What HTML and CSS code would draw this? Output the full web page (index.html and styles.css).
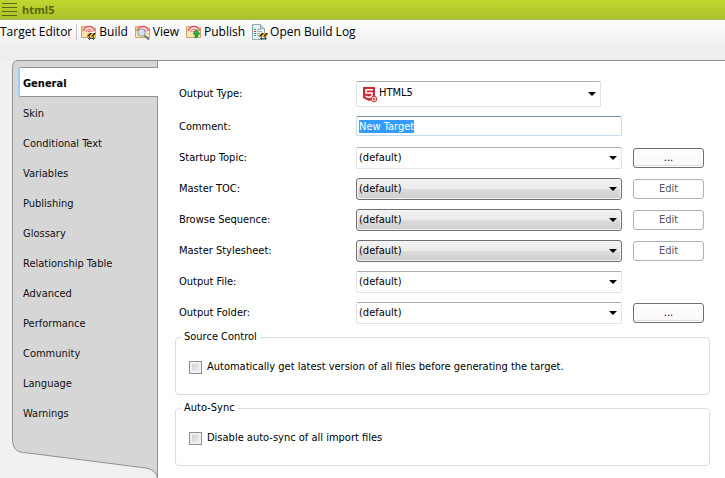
FILE: index.html
```html
<!DOCTYPE html>
<html lang="en">
<head>
<meta charset="utf-8">
<title>html5</title>
<link rel="stylesheet" href="styles.css">
</head>
<body>
<svg class="symbols" aria-hidden="true">
  <symbol id="folder" viewBox="0 0 16 16">
    <path d="M.5 13.500V2.500H5L6.500 4H14.500V13.500Z" fill="#efcf86" stroke="#c9a766"/>
    <path d="M2 9V7A6 6 0 0 1 14 7V9Z" fill="#fff0ed"/>
    <path d="M2.500 7A5.600 5.600 0 0 1 13.500 7" fill="none" stroke="#e8555c" stroke-width="1.500"/>
    <path d="M4.700 8A3.400 3.400 0 0 1 11.300 8" fill="none" stroke="#f08486" stroke-width="1.300"/>
    <path d="M7 8A1.200 1.200 0 0 1 9.200 8" fill="none" stroke="#e8555c" stroke-width="1.200"/>
    <path d="M1 13V8H6L7.500 9.500H14V13Z" fill="#f8e4ad"/>
  </symbol>
  <symbol id="barrier" viewBox="0 0 9 7">
    <path d="M2.500 3V7M6.500 3V7M1 5.500H8" stroke="#555" fill="none"/>
    <path d="M0 0H9V3.500H0Z" fill="#ffc928"/>
    <path d="M0 3.500L3 0H5L2 3.500ZM4 3.500L7 0H9L6 3.500Z" fill="#222"/>
  </symbol>
</svg>

<header class="titlebar">
  <svg class="grip" width="15" height="14" aria-hidden="true"><path d="M0 .5H15M0 4.500H15M0 8.500H15M0 12.500H15" stroke="#59680f"/></svg>
  <h1>html5</h1>
</header>

<div class="toolbar" role="toolbar" aria-label="Target Editor">
  <span class="caption">Target Editor</span>
  <button type="button"><svg width="16" height="16" viewBox="0 0 16 16"><use href="#folder" width="16" height="16"/><use href="#barrier" x="6" y="9" width="9" height="7"/></svg>Build</button>
  <button type="button"><svg width="16" height="16" viewBox="0 0 16 16"><use href="#folder" width="16" height="16"/><path d="M9.500 11.500L14 15.500" stroke="#777" stroke-width="2"/><circle cx="6.500" cy="8.500" r="3.700" fill="#d3e2ec" stroke="#8c9eac"/></svg>View</button>
  <button type="button"><svg width="16" height="16" viewBox="0 0 16 16"><use href="#folder" width="16" height="16"/><path d="M10.500 5.500L14 10H12V12.500L9 14V10H7Z" fill="#27b53e" stroke="#0c8427" stroke-width=".7"/></svg>Publish</button>
  <button type="button"><svg width="16" height="16" viewBox="0 0 16 16"><path d="M.5 .5H8.500L12.500 4.500V15.500H.5Z" fill="#eaf1f4" stroke="#91a5ad"/><path d="M8.500 .5V4.500H12.500" fill="#c9d8de" stroke="#91a5ad"/><path d="M5 5.500H9M5 7.500H10M5 9.500H10M5 11.500H8" stroke="#9cadb6"/><path d="M2 5.500H4" stroke="#19a83b"/><path d="M2 7.500H4" stroke="#e83434"/><path d="M2 9.500H4" stroke="#2575e1"/><path d="M2 11.500H4" stroke="#19a83b"/><use href="#barrier" x="7" y="9" width="9" height="7"/></svg>Open Build Log</button>
</div>

<div class="editor">
  <aside class="sidebar">
    <nav aria-label="Target settings">
      <a href="#general" class="current" aria-current="page">General</a>
      <a href="#skin">Skin</a>
      <a href="#conditional">Conditional Text</a>
      <a href="#variables">Variables</a>
      <a href="#publishing">Publishing</a>
      <a href="#glossary">Glossary</a>
      <a href="#relationship">Relationship Table</a>
      <a href="#advanced">Advanced</a>
      <a href="#performance">Performance</a>
      <a href="#community">Community</a>
      <a href="#language">Language</a>
      <a href="#warnings">Warnings</a>
    </nav>
    <svg class="tail" viewBox="0 0 146 41" preserveAspectRatio="none" aria-hidden="true">
      <path d="M.5 0V2C1 9 3 12 8 14C13 15 18 15 24 16L134 30Q145 32 145.500 41V0Z" fill="#d6d6d6"/>
      <path d="M.5 0V2C1 9 3 12 8 14C13 15 18 15 24 16L134 30Q145 32 145.500 41V0" fill="none" stroke="#919191"/>
    </svg>
  </aside>

  <main class="page" id="general">
    <form>
      <div class="fields">
        <label for="type">Output Type:</label>
        <div class="picker typed">
          <svg class="badge" width="15" height="16" viewBox="0 0 15 16" aria-hidden="true"><path d="M0 0H12V11L6 14L0 11Z" fill="#cb2b30"/><path d="M10 2.800H3V6H9V9.200L6 10.500L2.500 9.200" fill="none" stroke="#fff" stroke-width="1.500"/><circle cx="11" cy="12" r="2.800" fill="#fff" stroke="#cb2b30"/><path d="M9.500 12H12.500M11 10.500V13.500" stroke="#cb2b30"/></svg>
          <select id="type"><option>HTML5</option></select>
        </div>
        <label for="comment">Comment:</label>
        <input class="comment" id="comment" type="text" value="New Target">
        <label for="startup">Startup Topic:</label>
        <div class="picker"><select id="startup"><option>(default)</option></select></div>
        <button type="button" aria-label="Browse startup topic">...</button>
        <label for="toc">Master TOC:</label>
        <div class="picker raised"><select id="toc"><option>(default)</option></select></div>
        <button type="button" disabled>Edit</button>
        <label for="sequence">Browse Sequence:</label>
        <div class="picker raised"><select id="sequence"><option>(default)</option></select></div>
        <button type="button" disabled>Edit</button>
        <label for="stylesheet">Master Stylesheet:</label>
        <div class="picker raised"><select id="stylesheet"><option>(default)</option></select></div>
        <button type="button" disabled>Edit</button>
        <label for="file">Output File:</label>
        <div class="picker"><select id="file"><option>(default)</option></select></div>
        <label for="folder-path">Output Folder:</label>
        <div class="picker"><select id="folder-path"><option>(default)</option></select></div>
        <button type="button" aria-label="Browse output folder">...</button>
      </div>
      <fieldset>
        <legend>Source Control</legend>
        <label><input type="checkbox">Automatically get latest version of all files before generating the target.</label>
      </fieldset>
      <fieldset>
        <legend>Auto-Sync</legend>
        <label><input type="checkbox">Disable auto-sync of all import files</label>
      </fieldset>
    </form>
  </main>
</div>
<script src="script.js"></script>
</body>
</html>
```
FILE: styles.css
```css
* { box-sizing: border-box; }

body {
  margin: 0;
  min-height: 100vh;
  display: flex;
  flex-direction: column;
  background: #f0f0f0;
  color: #000;
  font: 11px/16px "DejaVu Sans Condensed", "Noto Sans", sans-serif;
}

button, input, select { font: inherit; color: inherit; }

.symbols { position: absolute; width: 0; height: 0; }

.titlebar {
  display: flex;
  align-items: center;
  gap: 5px;
  height: 20px;
  padding: 0 2px;
  background: linear-gradient(#bfd72f, #abc12a);
  border-bottom: 1px solid #a9b75a;
}

.titlebar h1 {
  margin: 0;
  font: bold 11px/16px "Open Sans", sans-serif;
  color: #56640f;
}

.toolbar {
  display: flex;
  align-items: flex-start;
  gap: 7px;
  height: 40px;
  padding-top: 4px;
  background: linear-gradient(#fdfdfd, #eeeeee 30px);
  font: 12px/16px "Open Sans", sans-serif;
}

.caption {
  padding-right: 4px;
  border-right: 1px solid #c5c5c5;
  margin-right: -3px;
  white-space: nowrap;
}

.toolbar button {
  display: flex;
  gap: 2px;
  padding: 0;
  border: 0;
  background: none;
  white-space: nowrap;
}

.editor {
  flex: 1;
  display: flex;
  margin-left: 12px;
  border-top: 1px solid #919191;
  border-top-left-radius: 6px;
}

.sidebar {
  flex: none;
  width: 146px;
  display: flex;
  flex-direction: column;
}

.sidebar nav {
  padding: 6px 0 11px 10px;
  background: #d6d6d6;
  border: 1px solid #919191;
  border-width: 0 1px;
  border-top-left-radius: 6px;
}

.sidebar a {
  display: block;
  padding: 9px 0 5px;
  color: #111;
  text-decoration: none;
}

.sidebar a.current {
  margin: 0 -1px 0 -5px;
  padding: 8px 0 4px 3px;
  background: #fff;
  border: 1px solid #919191;
  border-right: 0;
  border-left: 2px solid #9accff;
  border-radius: 2px 0 0 2px;
  color: #000;
  font-weight: bold;
}

.tail { display: block; width: 100%; height: 41px; }

.page {
  flex: 1;
  min-width: 0;
  padding: 20px 15px 12px 17px;
  background: #fff;
}

.fields {
  display: grid;
  grid-template-columns: 166px minmax(0, 266px) 71px;
  grid-template-rows: 26px;
  grid-auto-rows: 22px;
  gap: 9px 11px;
  padding-left: 4px;
  align-items: center;
}

.fields > label { grid-column: 1; }

.picker { position: relative; height: 100%; }
.picker.typed { margin-right: 21px; }

.picker::after {
  content: "";
  position: absolute;
  right: 5px;
  top: calc(50% - 2px);
  border: 4px solid transparent;
  border-top-color: #000;
  border-bottom: 0;
  pointer-events: none;
}

.badge { position: absolute; left: 7px; top: 6px; }

.picker select {
  display: block;
  width: 100%;
  height: 100%;
  padding: 0 18px 0 2px;
  appearance: none;
  background: #fff;
  border: 1px solid #e0e3ea;
  border-top-color: #abadb3;
  border-radius: 2px;
}

.picker.typed select { padding: 0 18px 2px 22px; }

.picker.raised select {
  background: linear-gradient(#f3f3f3, #ebebeb 50%, #dddddd 50%, #cdcdcd);
  border-color: #707070;
  border-radius: 3px;
  box-shadow: inset 0 0 0 1px #f5f5f5;
}

.comment {
  width: 100%;
  height: 20px;
  padding: 0 2px;
  align-self: start;
  border: 1px solid #c5daed;
  border-top-color: #7a8fa3;
  border-radius: 2px;
  outline: 0;
}

.comment::selection { background: rgba(51, 153, 255, 0.99); color: #fff; }

.fields button {
  height: 20px;
  padding: 0;
  background: linear-gradient(#fff, #f7f7f7);
  border: 1px solid #707070;
  border-radius: 3px;
  box-shadow: inset 0 0 0 1px #fff, inset 0 -2px 0 #dedede;
  line-height: 16px;
}

.fields button:disabled {
  background: #fff;
  border-color: #adb2b5;
  box-shadow: inset 0 0 0 1px #fcfcfc;
  color: #555;
}

fieldset {
  height: 66px;
  margin: 5px 0 0;
  padding: 14px 13px 0;
  border: 1px solid #d5dfe5;
  border-radius: 4px;
}

legend { margin-left: -8px; padding: 0 3px; }

fieldset label { display: flex; align-items: center; gap: 5px; }

fieldset input {
  appearance: none;
  width: 13px;
  height: 13px;
  margin: 0;
  border: 1px solid #8e8f8f;
  background: linear-gradient(135deg, #c5cad0, #f5f5f5);
  box-shadow: inset 0 0 0 2px #f0f0f0;
}
```
FILE: script.js
```js
const comment = document.getElementById("comment");
comment.focus();
comment.select();
```
